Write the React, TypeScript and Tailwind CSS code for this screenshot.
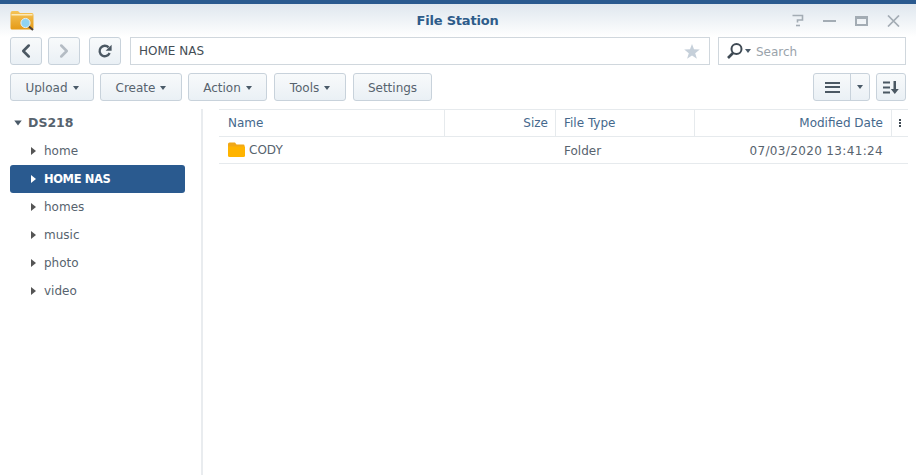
import { ChevronLeft, ChevronRight } from 'lucide-react';

const font = { fontFamily: '"DejaVu Sans", sans-serif' };

const btn = 'h-7 flex items-center justify-center rounded-[3px] border border-[#c8d2db] bg-gradient-to-b from-[#f8fafb] to-[#eaf0f5]';

function Caret({ className = 'border-t-[#4a5a68]' }: { className?: string }) {
  return <span className={`inline-block w-0 h-0 border-x-[3.5px] border-x-transparent border-t-[4px] ${className}`} />;
}

function RightCaret({ className = 'border-l-[#555]' }: { className?: string }) {
  return <span className={`inline-block w-0 h-0 border-y-[4.5px] border-y-transparent border-l-[5px] ${className}`} />;
}

function FolderSearchIcon() {
  return (
    <svg width="25" height="21" viewBox="0 0 25 21">
      <defs>
        <linearGradient id="fs" x1="0" y1="0" x2="0" y2="1">
          <stop offset="0" stopColor="#f5c458" />
          <stop offset="1" stopColor="#e59a16" />
        </linearGradient>
      </defs>
      <path d="M0.5 3 Q0.5 1 2.5 1 H8 L10 3 H22 Q23.5 3 23.5 5 V18 Q23.5 19.5 22 19.5 H2 Q0.5 19.5 0.5 18 Z" fill="url(#fs)" />
      <rect x="1.5" y="4" width="21" height="1.5" fill="#fbe9b8" />
      <circle cx="15.5" cy="13" r="4.6" fill="#8fd3f2" stroke="#e8eef0" strokeWidth="1" />
      <path d="M19 16.5 L23 20" stroke="#4a4038" strokeWidth="2" />
    </svg>
  );
}

function TitleButtons() {
  return (
    <div className="flex items-center gap-[19px] pr-[16px]">
      <svg width="12" height="13" viewBox="0 0 12 13" fill="none" stroke="#a3acb4" strokeWidth="1.6">
        <path d="M0.5 1.5 H10.5 V6 H5.5 V8.5" />
        <path d="M4 11.5 H8" />
      </svg>
      <span className="w-[13px] h-[2px] bg-[#a3acb4]" />
      <span className="w-[13px] h-[10px] border-2 border-t-[3px] border-[#a3acb4]" />
      <svg width="13" height="12" viewBox="0 0 13 12" stroke="#a3acb4" strokeWidth="1.7">
        <path d="M1 0.5 L12 11.5 M12 0.5 L1 11.5" />
      </svg>
    </div>
  );
}

function MenuButton({ label, width }: { label: string; width: string }) {
  return (
    <button className={`${btn} ${width} gap-[5px] pt-[2px] text-[12px] text-[#57636e]`}>
      {label}
      <Caret />
    </button>
  );
}

const shares = ['home', 'HOME NAS', 'homes', 'music', 'photo', 'video'];

export default function App() {
  return (
    <div style={font} className="w-[916px] h-[475px] overflow-hidden bg-white flex flex-col">
      <div className="h-[4px] bg-[#2a5a8f] shrink-0" />
      <div className="h-[33px] shrink-0 flex items-center justify-between bg-gradient-to-b from-[#dfe7ee] to-white">
        <div className="pl-[10px]"><FolderSearchIcon /></div>
        <div className="text-[13px] font-bold text-[#2e5c8a] tracking-[-0.2px] pl-[88px]">File Station</div>
        <TitleButtons />
      </div>

      <div className="flex items-center h-7 pl-[10px] pr-[10px] shrink-0">
        <button className={`${btn} w-[32px]`}><ChevronLeft size={22} strokeWidth={2.8} className="text-[#4b5863]" /></button>
        <button className={`${btn} w-[32px] ml-[6px]`}><ChevronRight size={22} strokeWidth={2.8} className="text-[#b4bcc4]" /></button>
        <button className={`${btn} w-[32px] ml-[9px]`}>
          <svg width="14" height="14" viewBox="0 0 14 14" fill="none">
            <path d="M11.6 9 A5.2 5.2 0 1 1 10.6 3.4" stroke="#4b5863" strokeWidth="2.4" />
            <path d="M13.6 0.8 V6.8 H7.6 Z" fill="#4b5863" />
          </svg>
        </button>
        <div className="ml-[9px] w-[580px] h-7 border border-[#d0d7dd] flex items-center justify-between pl-[8px] pr-[9px] text-[12px] text-[#444d55]">
          <span>HOME NAS</span>
          <svg width="16" height="15" viewBox="0 0 16 15"><path d="M8 0 L10 5.3 L15.8 5.6 L11.2 9.2 L12.9 14.8 L8 11.6 L3.1 14.8 L4.8 9.2 L0.2 5.6 L6 5.3 Z" fill="#c6d0da" /></svg>
        </div>
        <div className="ml-[8px] w-[188px] h-7 border border-[#d0d7dd] flex items-center pl-[7px] text-[12px] text-[#9aa3ab]">
          <svg width="17" height="18" viewBox="0 0 17 18" fill="none" stroke="#3f4a54">
            <circle cx="10.5" cy="7" r="5" strokeWidth="2" />
            <path d="M7 11 L2 16" strokeWidth="2.6" />
          </svg>
          <span className="ml-[2px] mr-[5px] flex"><Caret /></span>
          <span className="pt-[2px]">Search</span>
        </div>
      </div>

      <div className="flex items-center h-7 mt-[8px] pl-[10px] pr-[10px] shrink-0">
        <MenuButton label="Upload" width="w-[84px]" />
        <div className="w-[6px]" />
        <MenuButton label="Create" width="w-[82px]" />
        <div className="w-[6px]" />
        <MenuButton label="Action" width="w-[79px]" />
        <div className="w-[7px]" />
        <MenuButton label="Tools" width="w-[72px]" />
        <button className={`${btn} w-[79px] ml-[7px] pt-[2px] text-[12px] text-[#57636e]`}>Settings</button>
        <div className={`${btn} w-[57px] ml-auto`}>
          <div className="w-[37px] h-full flex items-center justify-center border-r border-[#c8d2db]">
            <span className="w-[15px] h-[11px] flex flex-col justify-between">
              <span className="h-[2px] bg-[#4b5863]" />
              <span className="h-[2px] bg-[#4b5863]" />
              <span className="h-[2px] bg-[#4b5863]" />
            </span>
          </div>
          <div className="flex-1 flex items-center justify-center"><Caret /></div>
        </div>
        <button className={`${btn} w-[30px] ml-[6px]`}>
          <svg width="16" height="13" viewBox="0 0 16 13" fill="#4b5863">
            <rect x="0" y="0.5" width="7" height="2" />
            <rect x="0" y="5.5" width="7" height="2" />
            <rect x="0" y="10.5" width="7" height="2" />
            <path d="M10.5 0 H13 V8 H15.8 L11.8 13 L7.8 8 H10.5 Z" />
          </svg>
        </button>
      </div>

      <div className="flex flex-1 mt-[8px] min-h-0">
        <aside className="w-[203px] shrink-0 border-r-2 border-[#e9ecef] pl-[10px]">
          <div className="h-[28px] flex items-center gap-[7px] pl-[5px] text-[12.5px] font-bold text-[#57636e]">
            <Caret className="border-t-[#4a5a68] scale-125" />
            DS218
          </div>
          {shares.map((s) => {
            const active = s === 'HOME NAS';
            return (
              <div
                key={s}
                className={`w-[175px] h-[28px] flex items-center gap-[8px] pl-[21px] rounded-[3px] ${active ? 'bg-[#2a5a8f] text-white font-bold text-[11.5px] tracking-[-0.4px]' : 'text-[#57636e] text-[12px]'}`}
              >
                <RightCaret className={active ? 'border-l-white' : 'border-l-[#555]'} />
                <span className={active ? 'pt-[2px]' : ''}>{s}</span>
              </div>
            );
          })}
        </aside>

        <main className="flex-1 pl-[16px] pr-[8px]">
          <div className="h-[28px] border-y border-[#e6eaed] flex items-center text-[12px] text-[#45688c]">
            <div className="w-[226px] h-full flex items-center pl-[9px] border-r border-[#e6eaed]">Name</div>
            <div className="w-[111px] h-full flex items-center justify-end pr-[7px] border-r border-[#e6eaed]">Size</div>
            <div className="w-[139px] h-full flex items-center pl-[8px] border-r border-[#e6eaed]">File Type</div>
            <div className="w-[197px] h-full flex items-center justify-end pr-[8px] border-r border-[#e6eaed]">Modified Date</div>
            <div className="flex-1 flex flex-col items-center gap-[1px]">
              <span className="w-[2px] h-[2px] bg-[#3f4a54]" />
              <span className="w-[2px] h-[2px] bg-[#3f4a54]" />
              <span className="w-[2px] h-[2px] bg-[#3f4a54]" />
            </div>
          </div>
          <div className="h-[27px] border-b border-[#e6eaed] flex items-center text-[12px] text-[#57636e]">
            <div className="w-[226px] flex items-center pl-[9px] gap-[4px]">
              <svg width="17" height="15" viewBox="0 0 17 15" className="shrink-0 -mt-[1px]">
                <path d="M0 2 Q0 0.5 1.5 0.5 H7 L8.5 2.5 H15.5 Q16.5 2.5 16.5 3.5 V5 H0 Z" fill="#f0a818" />
                <path d="M0 4.5 H17 V13.5 Q17 15 15.5 15 H1.5 Q0 15 0 13.5 Z" fill="#ffb400" />
              </svg>
              <span className="-mt-[1px]">CODY</span>
            </div>
            <div className="w-[111px]" />
            <div className="w-[139px] pl-[8px] pt-[2px]">Folder</div>
            <div className="w-[197px] text-right pr-[9px] pt-[2px] tracking-[0.35px]">07/03/2020 13:41:24</div>
          </div>
        </main>
      </div>
    </div>
  );
}
